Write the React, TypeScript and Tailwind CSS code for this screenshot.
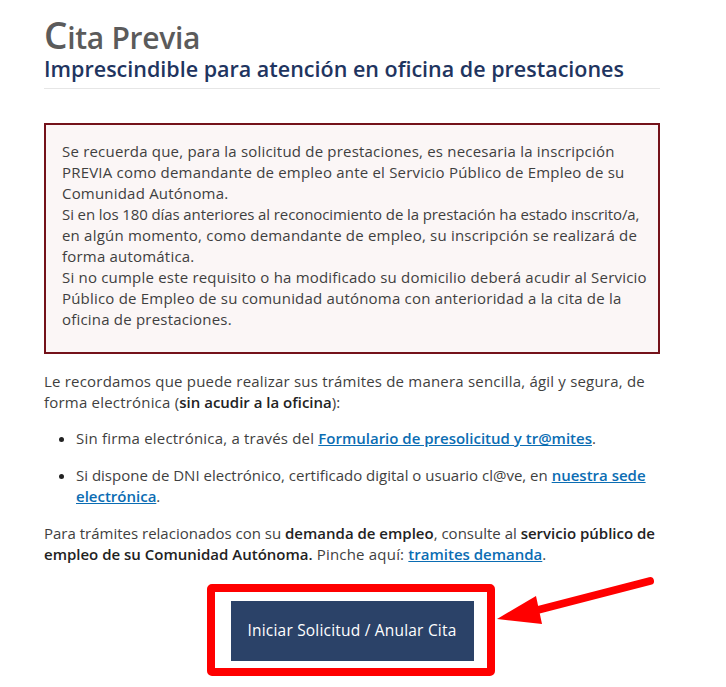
import React from "react";

export default function App() {
  const body = { fontFamily: '"Open Sans", "Noto Sans", sans-serif' };
  const B = ({ children }: { children: React.ReactNode }) => (
    <b className="font-semibold text-[#222] tracking-[0px]">{children}</b>
  );
  const A = ({ children }: { children: React.ReactNode }) => (
    <a className="font-semibold text-[#0b6db3] underline tracking-[0px]">{children}</a>
  );
  return (
    <div className="relative w-[726px] h-[687px] bg-white overflow-hidden" style={body}>
      <div className="ml-[44px] w-[616px] pt-[16px]">
        <h1 className="font-semibold text-[#5b5b5b] leading-none tracking-[-0.3px]">
          <span className="text-[37px]">C</span>
          <span className="text-[30px]">ita Previa</span>
        </h1>
        <h2 className="mt-[3px] text-[21.5px] font-semibold text-[#1f3560] leading-[26px]">
          Imprescindible para atención en oficina de prestaciones
        </h2>
        <div className="mt-[6px] h-px bg-[#e6e6e6]" />

        <div className="mt-[34px] border-2 border-[#74121a] bg-[#fbf6f6] px-[16px] pt-[16px] pb-[22px] text-[15px] tracking-[0.2px] leading-[21px] text-[#3f3f3f] whitespace-nowrap">
          Se recuerda que, para la solicitud de prestaciones, es necesaria la inscripción
          <br />
          PREVIA como demandante de empleo ante el Servicio Público de Empleo de su
          <br />
          Comunidad Autónoma.
          <br />
          <span className="tracking-[-0.1px]">Si en los 180 días anteriores al reconocimiento de la prestación ha estado inscrito/a,</span>
          <br />
          en algún momento, como demandante de empleo, su inscripción se realizará de
          <br />
          forma automática.
          <br />
          Si no cumple este requisito o ha modificado su domicilio deberá acudir al Servicio
          <br />
          Público de Empleo de su comunidad autónoma con anterioridad a la cita de la
          <br />
          oficina de prestaciones.
        </div>

        <p className="mt-[17px] text-[15px] tracking-[0.2px] leading-[21px] text-[#3f3f3f] whitespace-nowrap">
          Le recordamos que puede realizar sus trámites de manera sencilla, ágil y segura, de
          <br />
          forma electrónica (<B>sin acudir a la oficina</B>):
        </p>
        <ul className="mt-[15px] pl-[32px] list-disc text-[15px] tracking-[0.2px] leading-[21px] text-[#3f3f3f] marker:text-[#222] whitespace-nowrap">
          <li>
            Sin firma electrónica, a través del <A>Formulario de presolicitud y tr@mites</A>.
          </li>
          <li className="mt-[16px]">
            <span className="tracking-[0px]">Si dispone de DNI electrónico, certificado digital o usuario cl@ve, en </span>
            <A>nuestra sede</A>
            <br />
            <A>electrónica</A>.
          </li>
        </ul>
        <p className="mt-[16px] text-[15px] tracking-[0.2px] leading-[21px] text-[#3f3f3f] whitespace-nowrap">
          <span className="tracking-[0px]">Para trámites relacionados con su </span>
          <B>demanda de empleo</B>
          <span className="tracking-[0px]">, consulte al </span>
          <B>servicio público de</B>
          <br />
          <B>empleo de su Comunidad Autónoma.</B> Pinche aquí: <A>tramites demanda</A>.
        </p>

        <div className="mt-[36px] flex justify-center">
          <div className="relative">
            <button className="w-[243px] h-[60px] bg-[#2b4268] text-white text-[15.5px] tracking-[0.2px]">
              Iniciar Solicitud / Anular Cita
            </button>
            <div className="absolute left-[-24px] top-[-17px] w-[288px] h-[92px] border-[8px] border-[#ff0000] rounded-[5px] pointer-events-none" />
          </div>
        </div>
      </div>

      <svg className="absolute left-0 top-0 pointer-events-none" width="726" height="687">
        <line x1="650" y1="581" x2="530" y2="612" stroke="#ff0000" strokeWidth="8" strokeLinecap="round" />
        <polygon points="497,619 536,596 542,624" fill="#ff0000" />
      </svg>
    </div>
  );
}
